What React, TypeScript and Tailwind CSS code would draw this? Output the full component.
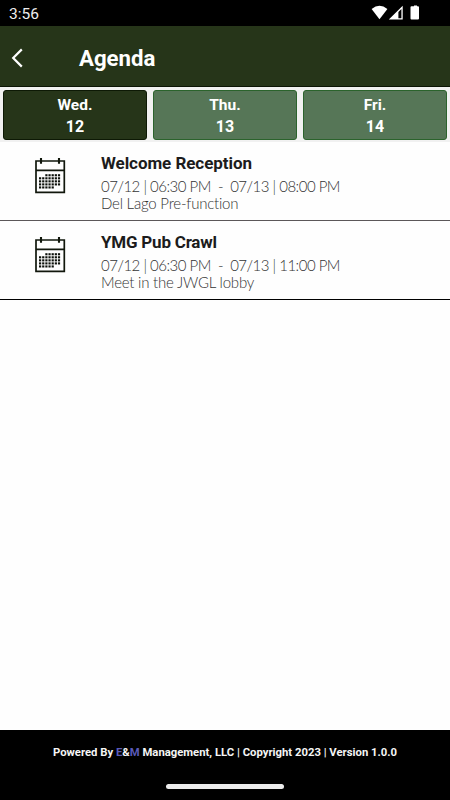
const days = [
  { name: 'Wed.', date: '12', active: true },
  { name: 'Thu.', date: '13', active: false },
  { name: 'Fri.', date: '14', active: false },
];

const events = [
  {
    title: 'Welcome Reception',
    titleClass: 'tracking-[-0.06px]',
    time: '07/12 | 06:30 PM  -  07/13 | 08:00 PM',
    place: 'Del Lago Pre-function',
    line: 'border-[#5b5759]',
  },
  {
    title: 'YMG Pub Crawl',
    titleClass: 'tracking-[-0.22px]',
    time: '07/12 | 06:30 PM  -  07/13 | 11:00 PM',
    place: 'Meet in the JWGL lobby',
    line: 'border-black',
  },
];

// First and last filled column for every week of the calendar icon
const weeks = [
  [2, 6],
  [0, 6],
  [0, 6],
  [0, 6],
  [0, 4],
];

function CalendarIcon() {
  return (
    <svg width="32" height="36" viewBox="0 0 32 36" className="block">
      <path d="M2 3H30.3V34.3H2Z M2 12.3H30.3" fill="none" stroke="#11170c" strokeWidth="1.7" />
      <path d="M7 0V5.8 M25 0V5.8" stroke="#11170c" strokeWidth="2.1" />
      {weeks.map(([from, to], row) =>
        Array.from({ length: to - from + 1 }, (_, i) => (
          <rect
            key={`${row}-${i}`}
            x={5 + (from + i) * 3.15}
            y={16.2 + row * 3.05}
            width="2.2"
            height="2.1"
            fill="#0c100a"
          />
        )),
      )}
    </svg>
  );
}

export default function App() {
  return (
    <div className="flex h-[800px] w-[450px] flex-col overflow-hidden bg-[#fefefe] font-[Roboto,sans-serif]">
      <div className="flex h-[26px] shrink-0 items-center justify-between bg-black pl-[9px] pr-[30px] text-white">
        <span className="pt-[2px] text-[15.5px] leading-[20px] text-[#eee]">3:56</span>
        <svg width="49" height="16" viewBox="0 0 49 16" fill="#fff">
          <path d="M0.6 4.1Q8.5 -2.8 16.4 4.1L8.5 14.2Z" />
          <path fillRule="evenodd" d="M31.7 0.7V14.6H17.8Z M30.4 4V13.3H27.4V7Z" />
          <path d="M40.5 1.2H43V0.4H46V1.2H47Q48 1.2 48 2.2V13.6Q48 14.6 47 14.6H40.5Q39.5 14.6 39.5 13.6V2.2Q39.5 1.2 40.5 1.2Z" />
        </svg>
      </div>

      <header className="flex h-[61px] shrink-0 items-center border-b border-[#0c1505] bg-[#263519] pl-[11px] text-white">
        <svg width="13" height="20" viewBox="0 0 13 20" className="mt-[4px]">
          <path d="M10.8 1.4L2.2 10L10.8 18.6" fill="none" stroke="#fff" strokeWidth="2.2" />
        </svg>
        <h1 className="ml-[55px] mt-[3px] text-[22.2px] font-bold leading-[28px]">Agenda</h1>
      </header>

      <nav className="flex h-[55px] shrink-0 gap-[6px] bg-[#f1f1f1] px-[3px] pb-[2px] pt-[3px]">
        {days.map((day) => (
          <button
            key={day.date}
            className={`flex h-[50px] flex-1 flex-col items-center rounded-[3px] border pt-[3px] text-[16px] font-bold leading-[22px] text-white ${
              day.active ? 'border-[#0d1905] bg-[#263519]' : 'border-[#2b632c] bg-[#567657]'
            }`}
          >
            <span className="text-[15.5px]">{day.name}</span>
            <span>{day.date}</span>
          </button>
        ))}
      </nav>

      <main className="flex-1">
        {events.map((event) => (
          <article key={event.title} className={`flex h-[79px] border-b ${event.line}`}>
            <div className="w-[101px] pl-[34px] pt-[16px]">
              <CalendarIcon />
            </div>
            <div className="pt-[10px]">
              <h2 className={`text-[17px] font-bold leading-[22px] text-[#1c1c1c] ${event.titleClass}`}>{event.title}</h2>
              <p className="mt-[4px] whitespace-pre font-[Lato,sans-serif] text-[15px] font-light leading-[17px] tracking-[-0.5px] text-[#333]">
                {event.time}
              </p>
              <p className="font-[Lato,sans-serif] text-[15px] font-light leading-[17px] tracking-[-0.22px] text-[#333]">
                {event.place}
              </p>
            </div>
          </article>
        ))}
      </main>

      <footer className="flex h-[70px] shrink-0 flex-col items-center bg-black pt-[15px] text-[11.3px] font-bold leading-[15px] text-[#f5f5f5]">
        <p className="whitespace-nowrap">
          Powered By <span className="text-[#5a5ab8]">E</span>&amp;<span className="text-[#5a5ab8]">M</span> Management, LLC | Copyright
          2023 | Version 1.0.0
        </p>
        <div className="mt-[24px] h-[5px] w-[118px] rounded-full bg-[#ececec]" />
      </footer>
    </div>
  );
}
